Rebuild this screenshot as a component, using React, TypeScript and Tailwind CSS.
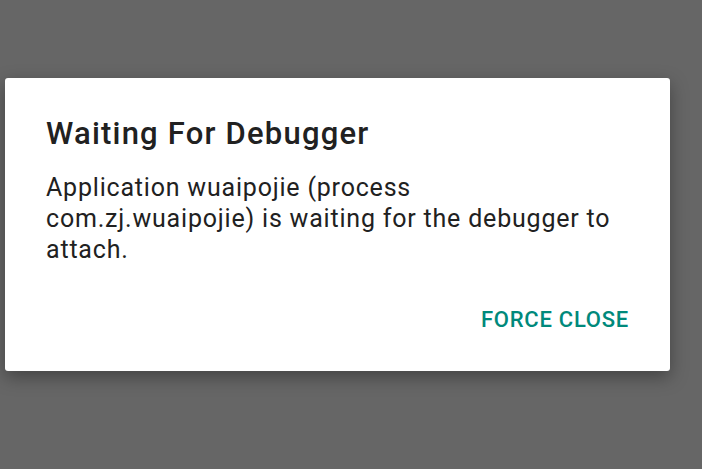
import React from "react";

export default function App() {
  return (
    <div
      className="w-[702px] h-[469px] bg-[#666666] overflow-hidden pt-[78px] pl-[5px]"
      style={{ fontFamily: "Roboto, 'Noto Sans', sans-serif" }}
    >
      <div className="w-[665px] h-[293px] bg-white rounded-[3px] shadow-[0_6px_18px_rgba(0,0,0,0.35)] pt-[38px] px-[41px] flex flex-col">
        <div className="text-[31px] leading-[36px] font-medium tracking-[1.2px] text-[#212121]">
          Waiting For Debugger
        </div>
        <div className="mt-[20px] w-[574px] text-[25px] leading-[31px] tracking-[0.8px] text-[#212121]">
          Application wuaipojie (process com.zj.wuaipojie) is waiting for the debugger to attach.
        </div>
        <div className="mt-[42px] flex justify-end">
          <span className="text-[22px] leading-[26px] font-medium tracking-[0.75px] text-[#00897b]">
            FORCE CLOSE
          </span>
        </div>
      </div>
    </div>
  );
}
